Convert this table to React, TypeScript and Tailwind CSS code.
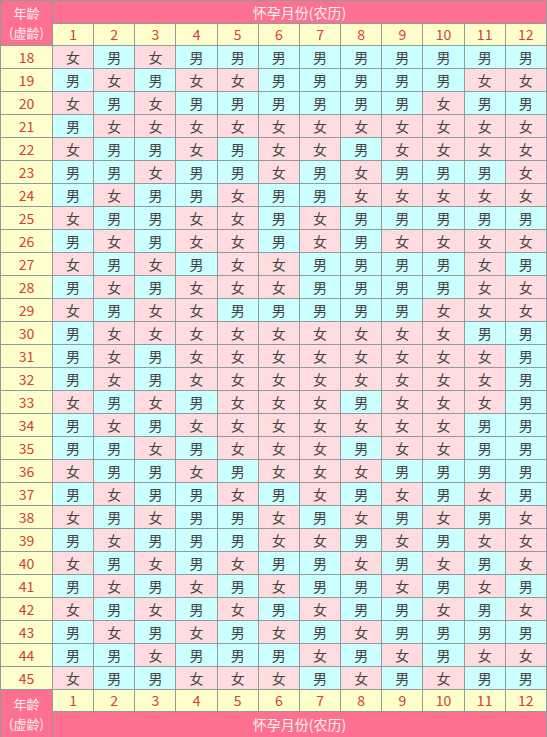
const rows: [number, string][] = [
  [18, "女男女男男男男男男男男男"],
  [19, "男女男女女男男男男男女女"],
  [20, "女男女男男男男男男女男男"],
  [21, "男女女女女女女女女女女女"],
  [22, "女男男女男女女男女女女女"],
  [23, "男男女男男女男女男男男女"],
  [24, "男女男男女男男女女女女女"],
  [25, "女男男女女男女男男男男男"],
  [26, "男女男女女男女男女女女女"],
  [27, "女男女男女女男男男男女男"],
  [28, "男女男女女女男男男男女女"],
  [29, "女男女女男男男男男女女女"],
  [30, "男女女女女女女女女女男男"],
  [31, "男女男女女女女女女女女男"],
  [32, "男女男女女女女女女女女男"],
  [33, "女男女男女女女男女女女男"],
  [34, "男女男女女女女女女女男男"],
  [35, "男男女男女女女男女女男男"],
  [36, "女男男女男女女女男男男男"],
  [37, "男女男男女男女男女男女男"],
  [38, "女男女男男女男女男女男女"],
  [39, "男女男男男女女男女男女女"],
  [40, "女男女男女男男女男女男女"],
  [41, "男女男女男女男男女男女男"],
  [42, "女男女男女男女男男女男女"],
  [43, "男女男女男女男女男男男男"],
  [44, "男男女男男男女男女男女女"],
  [45, "女男男女女女男女男女男男"],
];

const months = [1, 2, 3, 4, 5, 6, 7, 8, 9, 10, 11, 12];

const cell = "border border-[#8f9c9c] text-center p-0";

export default function App() {
  return (
    <div
      className="w-[547px] h-[737px] overflow-hidden bg-white"
      style={{ fontFamily: '"Noto Sans CJK SC", "Noto Sans", sans-serif' }}
    >
      <table className="w-[547px] table-fixed border-collapse border border-[#333]">
        <colgroup>
          <col className="w-[52px]" />
          {months.map((m) => (
            <col key={m} />
          ))}
        </colgroup>
        <thead>
          <tr className="h-[23px]">
            <th
              rowSpan={2}
              className={`${cell} bg-[#fe7090] text-[#fff0f3] text-[13px] font-normal leading-[20px]`}
            >
              年龄
              <br />
              (虚龄)
            </th>
            <th colSpan={12} className={`${cell} bg-[#fe7090] text-[#fff0f3] text-[14px] font-normal`}>
              怀孕月份(农历)
            </th>
          </tr>
          <tr className="h-[22px]">
            {months.map((m) => (
              <th key={m} className={`${cell} bg-[#ffffcc] text-[#d04040] text-[14px] font-normal`}>
                {m}
              </th>
            ))}
          </tr>
        </thead>
        <tbody>
          {rows.map(([age, line]) => (
            <tr key={age} className="h-[23px]">
              <td className={`${cell} bg-[#ffffcc] text-[#d04040] text-[14px]`}>{age}</td>
              {line.split("").map((g, i) => (
                <td
                  key={i}
                  className={`${cell} text-[14px] text-[#444] ${
                    g === "男" ? "bg-[#ccffff]" : "bg-[#ffdcdf]"
                  }`}
                >
                  {g}
                </td>
              ))}
            </tr>
          ))}
        </tbody>
        <tfoot>
          <tr className="h-[22px]">
            <td
              rowSpan={2}
              className={`${cell} bg-[#fe7090] text-[#fff0f3] text-[13px] leading-[20px]`}
            >
              年龄
              <br />
              (虚龄)
            </td>
            {months.map((m) => (
              <td key={m} className={`${cell} bg-[#ffffcc] text-[#d04040] text-[14px]`}>
                {m}
              </td>
            ))}
          </tr>
          <tr className="h-[26px]">
            <td colSpan={12} className={`${cell} bg-[#fe7090] text-[#fff0f3] text-[14px]`}>
              怀孕月份(农历)
            </td>
          </tr>
        </tfoot>
      </table>
    </div>
  );
}
